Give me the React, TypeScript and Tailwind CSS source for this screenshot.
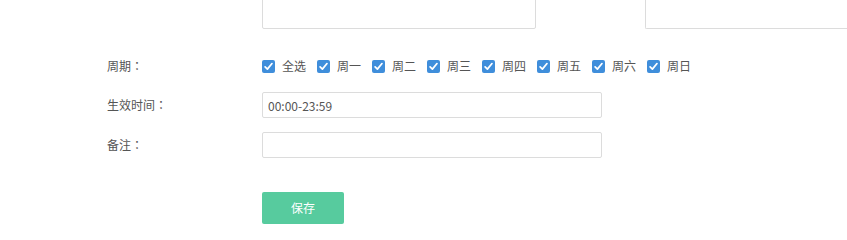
import { useState } from 'react'

const days = ['全选', '周一', '周二', '周三', '周四', '周五', '周六', '周日']

function CheckMark({ checked }: { checked: boolean }) {
  return (
    <span
      className={`flex h-[13px] w-[13px] items-center justify-center rounded-[2px] ${
        checked ? 'bg-[#3f8edb]' : 'border border-[#767676] bg-white'
      }`}
    >
      {checked && (
        <svg viewBox="0 0 12 12" className="h-[11px] w-[11px]" fill="none" aria-hidden="true">
          <path d="M2.3 6.4 4.8 8.9 9.8 2.8" stroke="#fff" strokeWidth="1.9" strokeLinecap="round" strokeLinejoin="round" />
        </svg>
      )}
    </span>
  )
}

function Label({ text }: { text: string }) {
  return (
    <span className="w-[155px] leading-[16px]">
      {text}
      <span style={{ fontFamily: '"Noto Sans CJK TC", sans-serif' }}>：</span>
    </span>
  )
}

export default function App() {
  const [checked, setChecked] = useState<boolean[]>(days.map(() => true))

  function toggle(i: number) {
    if (i === 0) {
      const next = !checked[0]
      setChecked(days.map(() => next))
      return
    }
    const copy = [...checked]
    copy[i] = !copy[i]
    copy[0] = copy.slice(1).every(Boolean)
    setChecked(copy)
  }

  return (
    <div
      className="h-[233px] w-[847px] overflow-hidden bg-white text-[12px] text-[#555]"
      style={{ fontFamily: '"Noto Sans CJK SC", "Noto Sans", sans-serif' }}
    >
      {/* tail of the previous form section */}
      <div className="-mt-[12px] flex pl-[262px]">
        <div className="h-[41px] w-[274px] rounded-b-[2px] border border-[#dcdcdc]" />
        <div className="ml-[109px] h-[41px] flex-1 rounded-bl-[2px] border border-r-0 border-[#dcdcdc]" />
      </div>

      <div className="mt-[29px] flex items-center pl-[107px]">
        <Label text="周期" />
        <div className="flex items-center">
          {days.map((d, i) => (
            <label key={d} className="mr-[11px] flex cursor-pointer items-center" onClick={() => toggle(i)}>
              <CheckMark checked={checked[i]} />
              <span className="ml-[7px] leading-[16px]">{d}</span>
            </label>
          ))}
        </div>
      </div>

      <div className="mt-[18px] flex items-center pl-[107px]">
        <Label text="生效时间" />
        <input
          defaultValue="00:00-23:59"
          className="h-[26px] w-[340px] rounded-[2px] border border-[#dcdcdc] px-[5px] text-[12px] text-[#555] outline-none"
        />
      </div>

      <div className="mt-[14px] flex items-center pl-[107px]">
        <Label text="备注" />
        <input className="h-[26px] w-[340px] rounded-[2px] border border-[#dcdcdc] px-[5px] text-[12px] outline-none" />
      </div>

      <div className="mt-[34px] pl-[262px]">
        <button className="h-[32px] w-[82px] rounded-[2px] bg-[#57cb9e] text-[12px] text-white">保存</button>
      </div>
    </div>
  )
}
